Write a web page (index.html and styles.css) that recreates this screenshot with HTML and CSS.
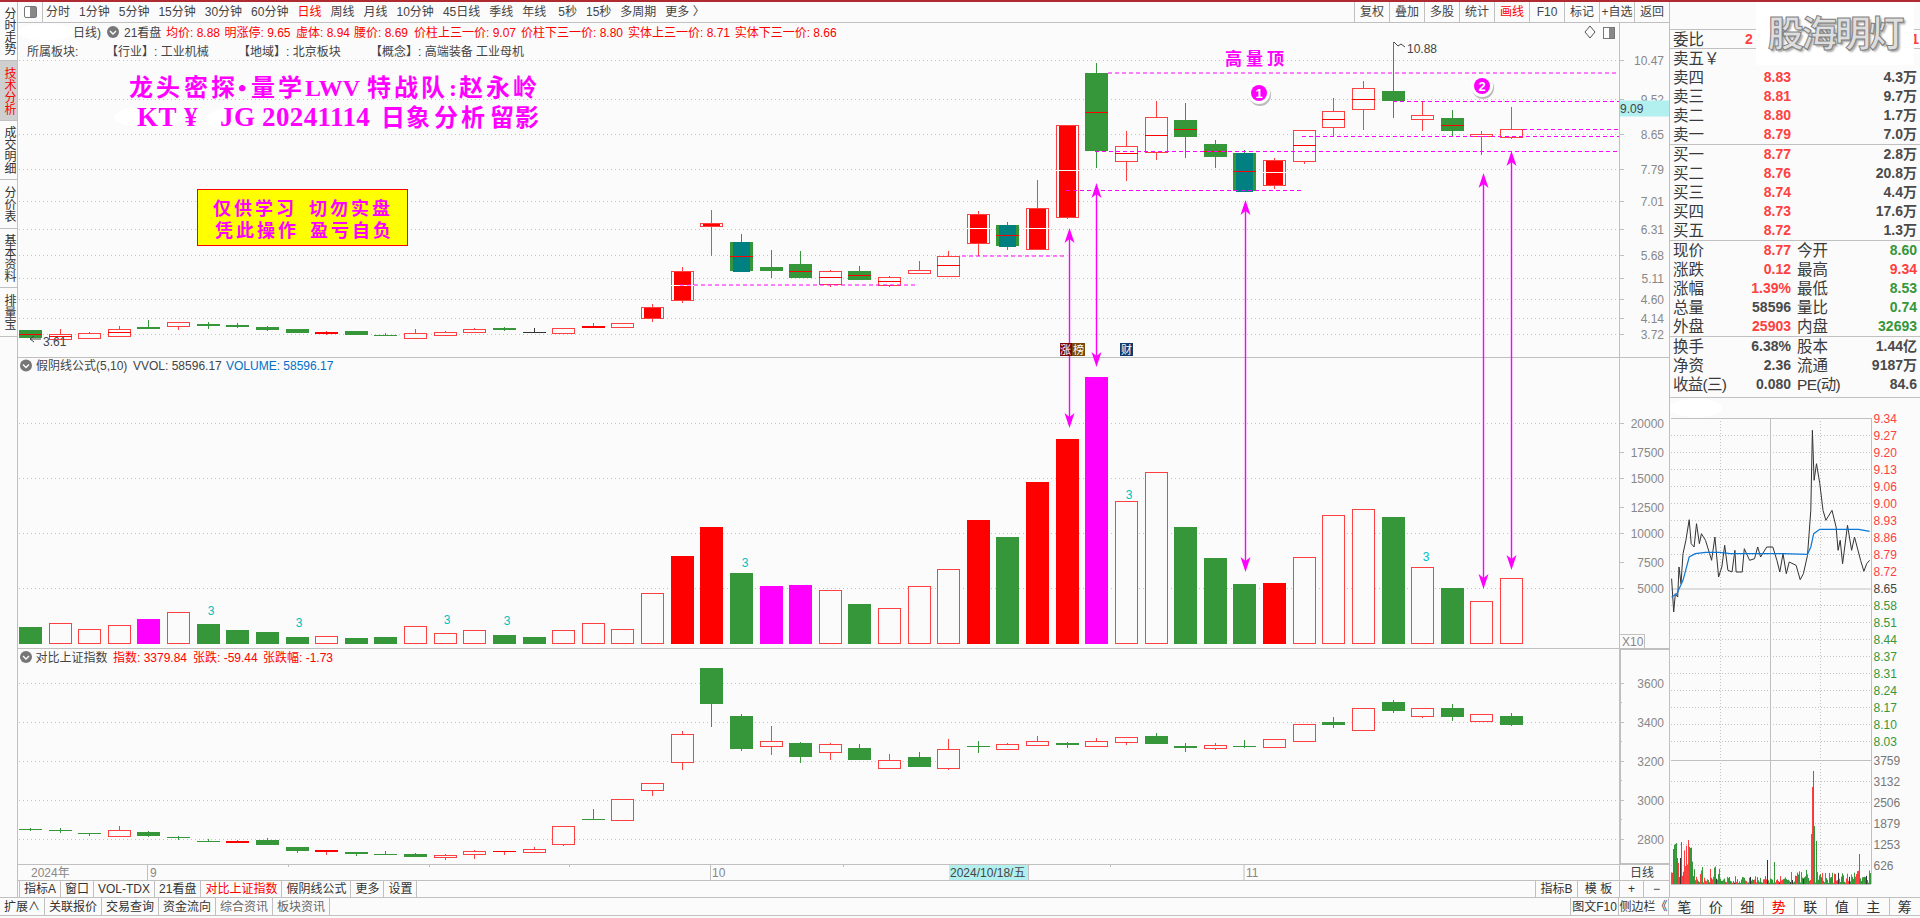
FILE: index.html
```html
<!DOCTYPE html>
<html lang="zh">
<head>
<meta charset="utf-8">
<title>K线</title>
<link rel="stylesheet" href="styles.css">
</head>
<body>
<div class="strip"></div>
<div class="app">
  <nav class="rail">
    <div class="rail-item h59">分时走势</div>
    <div class="rail-item h60 active">技术分析</div>
    <div class="rail-item h59">成交明细</div>
    <div class="rail-item h49">分价表</div>
    <div class="rail-item h59">基本资料</div>
    <div class="rail-item h49">排量宝</div>
  </nav>
  <main class="center">
    <header class="toolbar">
      <div class="tb-icon"><span class="split-icon"></span></div>
      <div class="periods">
        <span>分时</span><span>1分钟</span><span>5分钟</span><span>15分钟</span><span>30分钟</span><span>60分钟</span><span class="on">日线</span><span>周线</span><span>月线</span><span>10分钟</span><span>45日线</span><span>季线</span><span>年线</span><span class="wide">5秒</span><span>15秒</span><span>多周期</span><span>更多 〉</span>
      </div>
      <div class="tb-right">
        <span>复权</span><span>叠加</span><span>多股</span><span>统计</span><span class="on">画线</span><span>F10</span><span>标记</span><span>+自选</span><span>返回</span>
      </div>
    </header>
    <svg id="chart" class="chart" viewBox="18 23 1651 857" width="1651" height="857" xmlns="http://www.w3.org/2000/svg"></svg>
    <div class="tabs">
      <span>指标A</span><span>窗口</span><span>VOL-TDX</span><span>21看盘</span><span class="on">对比上证指数</span><span>假阴线公式</span><span>更多</span><span>设置</span>
      <div class="tabs-right"><span class="b42">指标B</span><span class="b42">模 板</span><span class="b24">+</span><span class="b26">−</span></div>
    </div>
  </main>
  <aside class="side">
    <div class="side-top"></div>
    <div class="q q-head sep"><b class="l">委比</b><b class="p up">2</b><b class="v up">1</b></div>
    <div class="q"><b class="l">卖五￥</b></div>
    <div class="q"><b class="l">卖四</b><b class="p up">8.83</b><b class="v dk">4.3万</b></div>
    <div class="q"><b class="l">卖三</b><b class="p up">8.81</b><b class="v dk">9.7万</b></div>
    <div class="q"><b class="l">卖二</b><b class="p up">8.80</b><b class="v dk">1.7万</b></div>
    <div class="q sep"><b class="l">卖一</b><b class="p up">8.79</b><b class="v dk">7.0万</b></div>
    <div class="q"><b class="l">买一</b><b class="p up">8.77</b><b class="v dk">2.8万</b></div>
    <div class="q"><b class="l">买二</b><b class="p up">8.76</b><b class="v dk">20.8万</b></div>
    <div class="q"><b class="l">买三</b><b class="p up">8.74</b><b class="v dk">4.4万</b></div>
    <div class="q"><b class="l">买四</b><b class="p up">8.73</b><b class="v dk">17.6万</b></div>
    <div class="q sep"><b class="l">买五</b><b class="p up">8.72</b><b class="v dk">1.3万</b></div>
    <div class="q"><b class="l">现价</b><b class="p up">8.77</b><b class="l2">今开</b><b class="v dn">8.60</b></div>
    <div class="q"><b class="l">涨跌</b><b class="p up">0.12</b><b class="l2">最高</b><b class="v up">9.34</b></div>
    <div class="q"><b class="l">涨幅</b><b class="p up">1.39%</b><b class="l2">最低</b><b class="v dn">8.53</b></div>
    <div class="q"><b class="l">总量</b><b class="p dk">58596</b><b class="l2">量比</b><b class="v dn">0.74</b></div>
    <div class="q sep"><b class="l">外盘</b><b class="p up">25903</b><b class="l2">内盘</b><b class="v dn">32693</b></div>
    <div class="q"><b class="l">换手</b><b class="p dk">6.38%</b><b class="l2">股本</b><b class="v dk">1.44亿</b></div>
    <div class="q"><b class="l">净资</b><b class="p dk">2.36</b><b class="l2">流通</b><b class="v dk">9187万</b></div>
    <div class="q q-end"><b class="l tight">收益(三)</b><b class="p dk">0.080</b><b class="l2 tight">PE(动)</b><b class="v dk">84.6</b></div>
    <svg id="mini" class="mini" viewBox="1669 401 251 496" width="251" height="496" xmlns="http://www.w3.org/2000/svg"></svg>
    <div class="logo">股海明灯</div>
  </aside>
</div>
<footer class="bottom">
  <div class="bottom-left">
    <span>扩展∧</span><span>关联报价</span><span>交易查询</span><span>资金流向</span><span class="dim">综合资讯</span><span class="dim">板块资讯</span>
  </div>
  <div class="bottom-right">
    <span class="w49">图文F10</span><span class="w50">侧边栏《</span>
    <div class="side-tabs"><span>笔</span><span>价</span><span>细</span><span class="on">势</span><span>联</span><span>值</span><span>主</span><span>筹</span></div>
  </div>
</footer>
<script src="script.js"></script>
</body>
</html>
```
FILE: styles.css
```css
* { box-sizing: border-box; }
html, body { margin: 0; padding: 0; }
body {
  width: 1920px; height: 918px; overflow: hidden;
  background: #fbfbfb; color: #333;
  font: 12px/1 "Liberation Sans", "Noto Sans CJK SC", sans-serif;
}
.strip { height: 2px; background: #b02a32; }
.app { display: flex; height: 895px; }

.rail { width: 18px; flex: none; border-right: 1px solid #c0c0c0; background: #fbfbfb; }
.rail-item {
  writing-mode: vertical-rl; text-orientation: upright;
  display: flex; align-items: center; justify-content: center;
  width: 17px; border-bottom: 1px solid #c0c0c0; color: #333; font-size: 12px; line-height: 17px;
}
.rail-item.active { background: #cfcfcf; color: #f00; }
.h59 { height: 59px; } .h60 { height: 60px; } .h49 { height: 49px; }

.center { width: 1651px; flex: none; display: flex; flex-direction: column; }
.toolbar { height: 21px; display: flex; align-items: stretch; border-bottom: 1px solid #c0c0c0; }
.tb-icon { width: 25px; border-right: 1px solid #c0c0c0; display: flex; align-items: center; justify-content: center; }
.split-icon { width: 13px; height: 12px; border: 1px solid #777; border-radius: 2px; background: linear-gradient(90deg, #fff 50%, #888 50%); }
.periods { display: flex; align-items: center; gap: 9px; padding-left: 3px; color: #444; white-space: nowrap; }
.periods .on, .tb-right .on, .tabs .on, .side-tabs .on { color: #f00; }
.periods .wide { margin-left: 3px; }
.tb-right { margin-left: auto; display: flex; }
.tb-right span { width: 35px; border-left: 1px solid #c0c0c0; display: flex; align-items: center; justify-content: center; color: #444; }

.chart { display: block; flex: none; }
.t { font: 12px "Liberation Sans", "Noto Sans CJK SC", sans-serif; fill: #444; }
.t-gray { fill: #888; }
.t-red { fill: #f00; }
.t-blue { fill: #0070c8; }
.t-teal { fill: #00c0c0; }
.t-light { fill: #777; }
.t-green { fill: #36963a; }
.t-up { fill: #ff4040; }
.t-white { font-size: 11px; fill: #fff; }
.t-num { font-size: 13px; font-weight: bold; fill: #fff; }
.wm { font: bold 24px "Liberation Serif", "Noto Sans CJK SC", serif; fill: #f0f; }
.wm-big { font-size: 27px; letter-spacing: .4px; }
.wm-note { font: bold 18px "Noto Sans CJK SC", sans-serif; fill: #f0f; letter-spacing: 3px; }
.wm-top { font: bold 17px "Noto Sans CJK SC", sans-serif; fill: #f0f; letter-spacing: 4px; }

.tabs { height: 17px; flex: none; display: flex; border-top: 1px solid #c0c0c0; padding-left: 1px; align-items: stretch; }
.tabs > span, .tabs-right span {
  display: flex; align-items: center; justify-content: center; padding: 0 4px;
  border-right: 1px solid #c0c0c0; color: #333; white-space: nowrap;
}
.tabs > span:first-child { border-left: 1px solid #c0c0c0; }
.tabs-right { margin-left: auto; display: flex; }
.tabs-right .b42 { width: 42px; border-left: 1px solid #c0c0c0; border-right: 0; }
.tabs-right .b24 { width: 24px; border-left: 1px solid #c0c0c0; border-right: 0; padding: 0; }
.tabs-right .b26 { width: 26px; border-left: 1px solid #c0c0c0; border-right: 0; padding: 0; }

.side { position: relative; width: 251px; flex: none; border-left: 1px solid #c0c0c0; }
.side-top { height: 27px; }
.q {
  display: grid; grid-template-columns: 59px 62px 64px 1fr; height: 19px; line-height: 19px;
  white-space: nowrap;
}
.q-head { height: 20px; border-top: 1px solid #c0c0c0; }
.q.sep { height: 20px; border-bottom: 1px solid #c0c0c0; }
.q-end { height: 23px; border-bottom: 1px solid #c0c0c0; }
.q b { font-weight: normal; }
.q .l, .q .l2 { font-size: 15.5px; color: #3a3a3a; }
.q .l { padding-left: 3px; overflow: visible; }
.q .l2 { padding-left: 6px; grid-column: 3; }
.q .tight { letter-spacing: -.7px; }
.q .p, .q .v { font-size: 14px; font-weight: bold; text-align: right; }
.q .p { grid-column: 2; }
.q .v { grid-column: 4; padding-right: 3px; }
.q-head .p { text-align: left; padding-left: 16px; }
.q-head .v { padding-right: 1px; }
.up { color: #ff4040; } .dn { color: #36963a; } .dk { color: #4a4a4a; }
.mini { display: block; }
.logo {
  position: absolute; left: 86px; top: 0; width: 158px; height: 63px;
  background: #fff; color: #dedede; font: bold 36px/58px "Noto Sans CJK SC", sans-serif;
  letter-spacing: -2.4px; text-align: center; white-space: nowrap;
  -webkit-text-stroke: 1px #808080;
  text-shadow: 2px 2px 2px #aaa;
}

.bottom { height: 19px; display: flex; justify-content: space-between; border-top: 1px solid #c0c0c0; border-bottom: 1px solid #c0c0c0; }
.bottom-left, .bottom-right, .side-tabs { display: flex; }
.bottom span { display: flex; align-items: center; justify-content: center; padding: 0 4px; border-right: 1px solid #c0c0c0; color: #333; white-space: nowrap; }
.bottom .dim { color: #666; }
.bottom-right .w49 { width: 49px; padding: 0; border-left: 1px solid #c0c0c0; }
.bottom-right .w50 { width: 50px; padding: 0; }
.side-tabs { width: 251px; }
.side-tabs span { flex: 1; padding: 0; font-size: 14px; }
.side-tabs span:last-child { border-right: 0; }
```
FILE: script.js
```js
const NS = 'http://www.w3.org/2000/svg';
const C = document.getElementById('chart');
const M = document.getElementById('mini');
const GREEN = '#36963a', RED = '#ff4040', PURE = '#ff0000', MAG = '#ff00ff', TEAL = '#008080', GRID = '#c4c4c4', LINE = '#c0c0c0', BG = '#fbfbfb';

function add(p, n, a, txt) {
  const e = document.createElementNS(NS, n);
  for (const k in a) e.setAttribute(k, a[k]);
  if (txt !== undefined) e.textContent = txt;
  p.appendChild(e);
  return e;
}
const line = (p, x1, y1, x2, y2, s, w, d) => {
  const a = { x1, y1, x2, y2, stroke: s, 'stroke-width': w || 1 };
  if (d) a['stroke-dasharray'] = d;
  return add(p, 'line', a);
};
const rect = (p, x, y, w, h, f, s) => {
  const a = { x, y, width: w, height: h, fill: f };
  if (s) a.stroke = s;
  return add(p, 'rect', a);
};
const text = (p, x, y, s, c, anchor) => {
  const a = { x, y: y + 4.5, class: 't ' + (c || '') };
  if (anchor) a['text-anchor'] = anchor;
  return add(p, 'text', a, s);
};
const slotX = i => Math.round(19 + i * 29.62);
const BW = 23;

/* ---------- grid + axis ---------- */
const L = 19, R = 1619, AX = 1664;
const pane1 = [[60, '10.47'], [99, '9.52'], [134, '8.65'], [169, '7.79'], [201, '7.01'], [229, '6.31'], [255, '5.68'], [278, '5.11'], [299, '4.60'], [318, '4.14'], [334, '3.72']];
const pane2 = [[423, '20000', 1], [452, '17500'], [478, '15000', 1], [507, '12500'], [533, '10000', 1], [562, '7500'], [588, '5000', 1]];
const pane3 = [[683, '3600'], [722, '3400'], [761, '3200'], [800, '3000'], [839, '2800']];
function axis(list, grid) {
  list.forEach(([y, s, g]) => {
    if (grid !== false || g) line(C, L, y + .5, R, y + .5, GRID, 1, '1 3');
    line(C, R, y + .5, R + 5, y + .5, LINE);
    text(C, AX, y, s, 't-gray', 'end');
  });
}
axis(pane1); axis(pane2, false); axis(pane3);
[702.5, 741.5, 780.5, 819.5].forEach(y => line(C, R, y, R + 3, y, LINE));

/* pane frames */
line(C, 18, 357.5, 1669, 357.5, LINE);
line(C, 18, 648.5, 1669, 648.5, LINE);
line(C, 18, 864.5, 1669, 864.5, LINE, 1);
line(C, R + .5, 23, R + .5, 880, LINE, 1);
line(C, R + 1.5, 649, R + 1.5, 864, LINE, 1);
line(C, R, 649.5, 1669, 649.5, LINE, 1);
line(C, R, 863.5, 1669, 863.5, LINE, 1);

/* soft white patches of the picture */
add(C, 'ellipse', { cx: 46, cy: 32, rx: 28, ry: 8, fill: '#fff' });
add(C, 'ellipse', { cx: 149, cy: 117, rx: 35, ry: 11, fill: '#fff' });
add(C, 'ellipse', { cx: 233, cy: 119, rx: 27, ry: 11, fill: '#fff' });

/* ---------- candles ---------- */
function candle(i, c) {
  const [top, bot, wt, wb, type, mid] = c;
  const x = slotX(i), cx = x + 11.5;
  const col = (type === 'g' || type === 'T') ? GREEN : type === 'k' ? '#333' : RED;
  if (wt !== null || wb !== null) line(C, cx, wt === null ? top : wt, cx, wb === null ? bot : wb, col);
  const h = bot - top;
  if (type === 'g') rect(C, x, top, BW, h, GREEN);
  else if (type === 'k') rect(C, x, top, BW, h, '#333');
  else if (type === 'r') rect(C, x, top, BW, h, PURE);
  else if (type === 'h') rect(C, x + .5, top + .5, BW - 1, h, BG, RED);
  else if (type === 'F') { rect(C, x + .5, top + .5, BW - 1, h, BG, RED); rect(C, x + 3, top + 1, BW - 6, h - 1, PURE); }
  else if (type === 'T') { rect(C, x, top, BW, h, GREEN); rect(C, x + 3, top, BW - 6, h + 1, TEAL); }
  if (mid) line(C, x, mid + .5, x + BW, mid + .5, type === 'F' ? '#fff' : PURE);
}
const K1 = [
  [330,338,null,null,'g',334],[334,339,329,null,'h',336],[333,338,332,null,'h'],[329,336,326,null,'h',332],[327,329,320,null,'g'],[322,326,null,330,'h'],[324,326,322,329,'g'],[325,327,323,328,'g'],[327,330,326,331,'g'],[329,333,null,null,'g'],
  [332,334,331,335,'r'],[331,335,null,null,'g'],[335,336,333,null,'g'],[333,338,329,null,'h'],[332,335,331,null,'h'],[329,332,328,null,'h'],[328,330,327,331,'g'],[332,333,328,null,'k'],[328,333,null,334,'h'],[326,328,323,null,'r'],
  [323,327,null,null,'h'],[307,318,304,322,'F'],[271,300,267,303,'F',285],[223,226,210,256,'F'],[242,271,234,null,'T',256],[267,271,250,278,'g'],[264,278,251,null,'g',271],[271,284,270,287,'h',277],[271,280,266,null,'g',275],[277,285,276,287,'h',281],
  [270,273,261,274,'h'],[256,276,251,null,'h',265],[214,243,211,256,'F',228],[225,246,222,250,'T',235],[208,249,180,null,'F',228],[125,217,null,219,'F',170],[73,151,63,168,'g',112],[146,161,131,181,'h',153],[117,152,101,160,'h',135],[120,137,103,158,'g',129],
  [144,157,140,168,'g',151],[153,191,150,null,'T',171],[160,185,158,189,'F',172],[130,161,null,164,'h',145],[111,127,98,137,'h',119],[88,109,81,130,'h',99],[91,101,42,118,'g'],[115,119,101,131,'h'],[118,131,110,137,'g',125],[134,136,131,155,'h'],
  [129,137,107,139,'h']
];
K1.forEach((c, i) => candle(i, c));

const K3 = [
  [829,830,828,831,'g'],[830,831,828,833,'g'],[833,834,null,836,'g'],[830,836,826,null,'h'],[832,836,831,837,'g'],[837,838,836,840,'g'],[841,842,839,null,'g'],[841,843,840,null,'r'],[840,845,838,null,'g'],[847,851,null,853,'g'],
  [850,852,null,855,'r'],[852,854,null,856,'g'],[854,855,851,null,'g'],[854,857,853,null,'g'],[855,857,854,860,'h'],[851,854,850,859,'h'],[851,852,null,855,'r'],[849,852,847,null,'h'],[826,844,null,846,'h'],[819,820,809,null,'g'],
  [799,820,null,null,'h'],[783,790,null,796,'h'],[734,762,731,770,'h'],[668,704,null,727,'g'],[716,749,714,751,'g'],[741,746,726,755,'h'],[743,757,742,763,'g'],[744,752,743,760,'h'],[748,760,744,null,'g'],[760,768,754,null,'h'],
  [757,767,752,null,'g'],[749,768,739,770,'h'],[746,747,741,753,'g'],[744,749,743,750,'h'],[741,745,736,746,'h'],[743,745,742,748,'g'],[741,746,738,null,'h'],[737,742,null,745,'h'],[736,744,733,null,'g'],[746,748,743,752,'g'],
  [745,748,743,750,'h'],[746,747,740,748,'g'],[739,747,null,748,'h'],[724,741,null,null,'h'],[722,725,717,728,'g'],[708,730,null,null,'h'],[702,711,700,713,'g'],[708,716,null,718,'h'],[708,717,704,721,'g'],[714,721,null,null,'h'],
  [716,725,713,726,'g']
];
K3.forEach((c, i) => candle(i, c));

/* ---------- volume bars ---------- */
const BASE = 644;
const V = [[627,'g'],[623,'h'],[629,'h'],[625,'h'],[619,'m'],[612,'h'],[624,'g'],[630,'g'],[632,'g'],[637,'g'],[636,'h'],[638,'g'],[637,'g'],[626,'h'],[633,'h'],[630,'h'],[635,'g'],[637,'g'],[630,'h'],[623,'h'],[629,'h'],
  [593,'h'],[556,'r'],[527,'r'],[573,'g'],[586,'m'],[585,'m'],[590,'h'],[604,'g'],[608,'h'],[586,'h'],[569,'h'],[520,'r'],[537,'g'],[482,'r'],[439,'r'],[377,'m'],[501,'h'],[472,'h'],[527,'g'],[558,'g'],[584,'g'],[583,'r'],
  [557,'h'],[515,'h'],[509,'h'],[517,'g'],[567,'h'],[588,'g'],[601,'h'],[578,'h']];
V.forEach(([t, k], i) => {
  const x = slotX(i);
  if (k === 'h') rect(C, x + .5, t + .5, BW - 1, BASE - t - 1, BG, RED);
  else rect(C, x, t, BW, BASE - t, k === 'g' ? GREEN : k === 'r' ? PURE : MAG);
});
[[211, 610], [299, 622], [447, 619], [507, 620], [745, 562], [1129, 494], [1426, 556]].forEach(([x, y]) => text(C, x, y, '3', 't-teal', 'middle'));
rect(C, 1619.5, 634.5, 25, 14, BG, LINE);
text(C, 1622, 641, 'X10', 't-gray');

/* ---------- dashed marks ---------- */
[[680, 917, 285], [962, 1064, 256], [1108, 1619, 73], [1095, 1619, 151.5], [1066, 1302, 190.5], [1393, 1619, 101.5], [1523, 1619, 129.5], [1302, 1619, 136.5]]
  .forEach(([a, b, y]) => line(C, a, y, b, y, MAG, 1, '4 3'));

/* ---------- arrows ---------- */
function arrow(x, y1, y2) {
  line(C, x, y1 + 8, x, y2 - 8, MAG, 1.4);
  const head = (y, s) => add(C, 'polygon', { points: `${x},${y} ${x + 5},${y + s * 15} ${x},${y + s * 11} ${x - 5},${y + s * 15}`, fill: MAG });
  head(y1, 1); head(y2, -1);
}
arrow(1069.5, 228, 428); arrow(1096.5, 183, 367); arrow(1245.5, 200, 572); arrow(1483.5, 173, 589); arrow(1511.5, 151, 570);

/* ---------- badges ---------- */
rect(C, 1060, 343, 12, 13, '#7a0808'); text(C, 1060, 349, '涨', 't-white');
rect(C, 1072, 343, 13, 13, '#7a4a08'); text(C, 1073, 349, '榜', 't-white');
rect(C, 1120, 343, 13, 13, '#0e3a6e'); text(C, 1121, 349, '财', 't-white');

function bubble(x, y, n) {
  add(C, 'circle', { cx: x + 1, cy: y + 2, r: 11, fill: '#bbb' });
  add(C, 'circle', { cx: x, cy: y, r: 11, fill: '#fff' });
  add(C, 'circle', { cx: x, cy: y, r: 8, fill: MAG });
  text(C, x, y, n, 't-num', 'middle');
}
bubble(1259, 93, '1'); bubble(1482, 86, '2');

/* ---------- overlay captions ---------- */
function spans(y, parts, cls) {
  const t = add(C, 'text', { y, class: cls });
  parts.forEach(([x, s, c]) => {
    const a = { x };
    if (c) a.class = c;
    add(t, 'tspan', a, s);
  });
}
spans(96, [[129,'龙'],[156,'头'],[184,'密'],[211,'探'],[238,'•'],[251,'量'],[278,'学'],[305,'LWV'],[367,'特'],[394,'战'],[421,'队'],[449,':'],[459,'赵'],[486,'永'],[513,'岭']], 'wm');
spans(126, [[137,'KT','wm-big'],[184,'¥','wm-big'],[220,'JG','wm-big'],[262,'20241114','wm-big'],[381,'日'],[406,'象'],[434,'分'],[461,'析'],[490,'留'],[515,'影']], 'wm');
add(C, 'text', { x: 1225, y: 65, class: 'wm-top' }, '高量顶');

rect(C, 197.5, 189.5, 210, 56, '#ffff00', '#ff0000');
add(C, 'text', { x: 213, y: 215, class: 'wm-note' }, '仅供学习');
add(C, 'text', { x: 309, y: 215, class: 'wm-note' }, '切勿实盘');
add(C, 'text', { x: 215, y: 237, class: 'wm-note' }, '凭此操作');
add(C, 'text', { x: 310, y: 237, class: 'wm-note' }, '盈亏自负');

/* ---------- pane titles ---------- */
function chevron(x, y) {
  add(C, 'circle', { cx: x, cy: y, r: 6, fill: '#777' });
  add(C, 'polyline', { points: `${x - 3},${y - 1} ${x},${y + 2} ${x + 3},${y - 1}`, fill: 'none', stroke: '#fff', 'stroke-width': 1.4 });
}
text(C, 73, 32, '日线)');
chevron(113, 32);
text(C, 124, 32, '21看盘');
[[166, '均价: 8.88'], [224.5, '明涨停: 9.65'], [296, '虚体: 8.94'], [354, '腰价: 8.69'], [414, '价柱上三一价: 9.07'], [521, '价柱下三一价: 8.80'], [628, '实体上三一价: 8.71'], [734.7, '实体下三一价: 8.66']]
  .forEach(([x, s]) => text(C, x, 32, s, 't-red'));
[[27, '所属板块:'], [106, '【行业】: 工业机械'], [238, '【地域】: 北京板块'], [370, '【概念】: 高端装备 工业母机']].forEach(([x, s]) => text(C, x, 51, s));

chevron(26, 365.5);
text(C, 36, 365.5, '假阴线公式(5,10)');
text(C, 133, 365.5, 'VVOL: 58596.17');
text(C, 226, 365.5, 'VOLUME: 58596.17', 't-blue');

chevron(26, 657);
text(C, 35.5, 657, '对比上证指数');
text(C, 113, 657, '指数: 3379.84', 't-red');
text(C, 193, 657, '张跌: -59.44', 't-red');
text(C, 263, 657, '张跌幅: -1.73', 't-red');

/* ---------- extreme labels ---------- */
text(C, 1407, 48.5, '10.88');
add(C, 'polyline', { points: '1394,42 1398,46 1401,44 1405,47', fill: 'none', stroke: '#444' });
text(C, 43, 341, '3.61');
line(C, 30, 339, 41, 339, '#444');
add(C, 'polyline', { points: '34,336 30,339 34,342', fill: 'none', stroke: '#444' });

/* chart corner icons */
add(C, 'polygon', { points: '1590,26 1595,32 1590,38 1585,32', fill: 'none', stroke: '#555' });
rect(C, 1603.5, 27.5, 11, 11, '#fff', '#777');
rect(C, 1609, 28, 5, 10, '#888');

/* crosshair price */
rect(C, 1620, 100.5, 49, 16, '#b2efef');
text(C, 1620, 108, '9.09', '');

/* ---------- date axis ---------- */
text(C, 31, 872, '2024年', 't-gray');
[147, 710, 1243.5].forEach(x => line(C, x + .5, 864, x + .5, 880, LINE));
text(C, 150, 872, '9', 't-gray');
text(C, 712, 872, '10', 't-gray');
text(C, 1246, 872, '11', 't-gray');
[288.5, 429.5, 569.5, 843.5, 1110.5].forEach(x => line(C, x, 865, x, 867, LINE));
rect(C, 949, 865, 79, 15, '#b2efef');
text(C, 950, 872, '2024/10/18/五', '');
line(C, 1028.5, 865, 1028.5, 880, LINE);
text(C, 1642, 872, '日线', '', 'middle');

/* ---------- intraday mini chart ---------- */
const mx = z => 1280 + z / 2.45, my = z => 400 + z / 3;
const ML = 1670, MR = 1870;
const labels = ['9.34','9.27','9.20','9.13','9.06','9.00','8.93','8.86','8.79','8.72','8.65','8.58','8.51','8.44','8.37','8.31','8.24','8.17','8.10','8.03'];
add(M, 'ellipse', { cx: 1695, cy: 411, rx: 26, ry: 9, fill: '#fff' });
labels.forEach((s, i) => {
  const y = 421.5 + i * 17;
  if (i === 10) line(M, ML, y + .5, MR, y + .5, LINE);
  else line(M, ML, y, MR, y, GRID, 1, '1 2');
  text(M, 1872.5, y, s, i < 10 ? 't-up' : i === 10 ? '' : 't-green');
});
line(M, ML, 421.5, MR, 421.5, LINE);
line(M, ML, 763.5, MR, 763.5, LINE);
[['3759', 763], ['3132', 784], ['2506', 805], ['1879', 826], ['1253', 847], ['626', 868]].forEach(([s, y], i) => {
  if (i) line(M, ML, y + .5, MR, y + .5, GRID, 1, '1 2');
  text(M, 1872.5, y, s, 't-light');
});
line(M, 1719.5, 421, 1719.5, 887, GRID, 1, '1 2');
line(M, 1769.5, 421, 1769.5, 887, LINE);
line(M, 1819.5, 421, 1819.5, 887, GRID, 1, '1 2');
line(M, MR + .5, 421, MR + .5, 887, LINE);
line(M, ML, 887.5, MR, 887.5, LINE);

/* traded volume: seeded so the shape is stable */
let seed = 21;
const rnd = () => (seed = (seed * 9301 + 49297) % 233280) / 233280;
for (let x = ML; x < MR; x++) {
  const env = x < 1692 ? 40 : x < 1719 ? 18 : x < 1790 ? 7 : x < 1806 ? 14 : x < 1850 ? 11 : 13;
  const r = rnd();
  const h = 1 + rnd() * env;
  const c = r < .45 ? RED : r < .93 ? GREEN : '#333';
  rect(M, x, 887 - h, 1, h, c);
}
[[1810, 50, RED], [1811, 97, RED], [1812, 113, GREEN], [1813, 58, GREEN], [1815, 43, GREEN], [1766, 24, '#333'], [1773, 22, GREEN], [1858, 30, GREEN], [1687, 44, RED], [1672, 35, GREEN], [1674, 40, RED], [1680, 42, GREEN]]
  .forEach(([x, h, c]) => rect(M, x, 887 - h, 1, h, c));

const poly = (pts, c, w) => add(M, 'polyline', { points: pts.map(([x, y]) => `${mx(x).toFixed(1)},${my(y).toFixed(1)}`).join(' '), fill: 'none', stroke: c, 'stroke-width': w });
poly([[957,545],[962,645],[966,590],[972,600],[975,510],[980,560],[985,470],[992,430],[1000,368],[1005,440],[1012,450],[1018,380],[1025,440],[1030,410],[1040,430],[1050,470],[1055,490],[1063,420],[1072,540],[1080,510],[1087,445],[1095,520],[1105,525],[1112,460],[1115,525],[1130,525],[1135,455],[1148,490],[1160,485],[1168,450],[1175,480],[1190,450],[1205,450],[1215,490],[1222,525],[1230,470],[1238,530],[1245,495],[1262,505],[1272,548],[1280,530],[1290,475],[1298,340],[1302,100],[1306,250],[1312,200],[1320,260],[1328,340],[1335,370],[1350,340],[1360,390],[1365,460],[1370,430],[1376,500],[1388,385],[1398,460],[1405,420],[1420,490],[1428,523],[1435,500],[1442,490]], '#333', 1);
poly([[957,600],[970,590],[985,550],[1000,480],[1015,470],[1040,466],[1075,466],[1100,470],[1230,470],[1290,472],[1298,450],[1305,410],[1320,397],[1415,397],[1442,403]], '#0a78d8', 1.2);
```
